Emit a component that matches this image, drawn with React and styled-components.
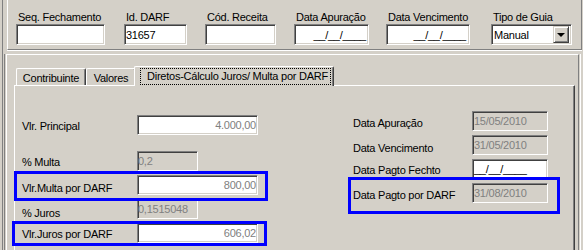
import React from 'react';
import styled, { createGlobalStyle } from 'styled-components';

const Global = createGlobalStyle`
  html, body { margin: 0; padding: 0; background: #D4D0C8; }
  body { font-family: "Liberation Sans", Arial, sans-serif; font-size: 11px; }
  * { box-sizing: border-box; }
`;

const Screen = styled.div`
  position: relative;
  width: 583px;
  height: 250px;
  overflow: hidden;
  background: #D4D0C8;
  color: #000;
  font-family: "Liberation Sans", Arial, sans-serif;
  font-size: 11px;
  letter-spacing: -0.25px;
  padding-left: 2px;
  display: flex;
`;

const Frame = styled.div`
  flex: 1;
  border-left: 1px solid #808080;
  display: flex;
  flex-direction: column;
`;

const TopPanel = styled.div`
  margin-left: 4px;
  width: 575px;
  height: 50px;
  border-left: 1px solid #fff;
  border-right: 1px solid #808080;
  border-bottom: 1px solid #808080;
  box-shadow: 0 1px 0 #fff;
  padding: 11px 0 0 8px;
  display: flex;
  align-items: flex-start;
`;

const Field = styled.div`
  display: flex;
  flex-direction: column;
  width: ${p => p.$w}px;
  margin-left: ${p => p.$ml || 0}px;
`;

const FieldLabel = styled.div`
  height: 13px;
  line-height: 13px;
  padding-left: 2px;
  white-space: nowrap;
`;

const Sunken = styled.div`
  height: ${p => p.$h || 20}px;
  width: ${p => p.$w ? `${p.$w}px` : '100%'};
  background: ${p => (p.$disabled ? '#D4D0C8' : '#fff')};
  color: ${p => p.$color || '#000'};
  border-top: 1px solid #808080;
  border-left: 1px solid #808080;
  border-bottom: 1px solid #fff;
  border-right: 1px solid #fff;
  box-shadow: inset 1px 1px 0 #404040, inset -1px -1px 0 #D4D0C8;
  display: flex;
  align-items: center;
  justify-content: ${p => (p.$align === 'right' ? 'flex-end' : 'flex-start')};
  padding: 0 ${p => p.$pr ?? 1}px 0 ${p => p.$pl ?? 1}px;
  white-space: nowrap;
  flex-shrink: 0;
`;

const SelectBox = styled(Sunken)`
  justify-content: space-between;
  padding: 0 2px 0 2px;
`;

const DropButton = styled.div`
  width: 16px;
  height: 17px;
  background: #D4D0C8;
  border-top: 1px solid #D4D0C8;
  border-left: 1px solid #D4D0C8;
  border-right: 1px solid #404040;
  border-bottom: 1px solid #404040;
  box-shadow: inset 1px 1px 0 #fff, inset -1px -1px 0 #808080;
  display: flex;
  align-items: center;
  justify-content: center;
`;

const Arrow = styled.div`
  width: 0;
  height: 0;
  border-left: 4px solid transparent;
  border-right: 4px solid transparent;
  border-top: 4px solid #000;
  margin-top: 1px;
`;

const LowerOuter = styled.div`
  margin-top: 4px;
  margin-left: 1px;
  width: 577px;
  flex: 1;
  border-left: 1px solid #808080;
  border-right: 1px solid #fff;
  display: flex;
`;

const LowerInner = styled.div`
  flex: 1;
  margin: 0 1px 0 1px;
  border-left: 1px solid #fff;
  border-top: 1px solid #fff;
  border-right: 1px solid #808080;
  padding: 11px 3px 0 7px;
  display: flex;
  flex-direction: column;
`;

const TabStrip = styled.div`
  display: flex;
  align-items: flex-end;
  padding-left: 2px;
  height: 19px;
  position: relative;
  z-index: 2;
`;

const Tab = styled.div`
  width: ${p => p.$w}px;
  height: ${p => (p.$active ? 20 : 17)}px;
  margin-left: ${p => (p.$active ? -2 : 0)}px;
  margin-bottom: ${p => (p.$active ? -1 : 0)}px;
  background: #D4D0C8;
  border-top: 1px solid #fff;
  border-left: 1px solid #fff;
  border-right: 1px solid #404040;
  border-top-left-radius: 2px;
  border-top-right-radius: 2px;
  box-shadow: inset -1px 0 0 #808080;
  display: flex;
  align-items: center;
  justify-content: center;
  padding-top: ${p => (p.$active ? 0 : 1)}px;
  padding-left: ${p => (p.$active ? 3 : 0)}px;
  white-space: nowrap;
  position: relative;
  z-index: ${p => (p.$active ? 2 : 1)};
`;

const Focus = styled.span`
  border: 1px dotted #000;
  padding: 1px 2px 1px 6px;
  line-height: 13px;
`;

const TabBody = styled.div`
  flex: 1;
  border-top: 1px solid #fff;
  border-left: 1px solid #fff;
  border-right: 1px solid #404040;
  box-shadow: inset -1px 0 0 #808080;
  display: flex;
  padding-left: 7px;
`;

const Column = styled.div`
  display: flex;
  flex-direction: column;
  width: ${p => p.$w}px;
  padding-top: ${p => p.$pt}px;
  gap: 4px;
`;

const Row = styled.div`
  display: flex;
  align-items: center;
  height: 20px;
  margin-top: ${p => p.$mt || 0}px;
`;

const RowLabel = styled.div`
  width: ${p => p.$w}px;
  flex-shrink: 0;
  white-space: nowrap;
  position: relative;
  top: ${p => p.$dy || 0}px;
`;

const Highlight = styled.div`
  position: absolute;
  left: ${p => p.$x}px;
  top: ${p => p.$y}px;
  width: ${p => p.$w}px;
  height: ${p => p.$h}px;
  border: 3px solid #0000ff;
  pointer-events: none;
  z-index: 5;
`;

const GRAY = '#808080';

export default function App() {
  return (
    <Screen>
      <Global />
      <Frame>
        <TopPanel>
          <Field $w={89}>
            <FieldLabel>Seq. Fechamento</FieldLabel>
            <Sunken $h={21} />
          </Field>
          <Field $w={63} $ml={19}>
            <FieldLabel>Id. DARF</FieldLabel>
            <Sunken $h={21} $pl={1}>31657</Sunken>
          </Field>
          <Field $w={71} $ml={18}>
            <FieldLabel>Cód. Receita</FieldLabel>
            <Sunken $h={21} />
          </Field>
          <Field $w={75} $ml={18}>
            <FieldLabel>Data Apuração</FieldLabel>
            <Sunken $h={21} $align="right" $pr={2}>__/__/____</Sunken>
          </Field>
          <Field $w={84} $ml={17}>
            <FieldLabel>Data Vencimento</FieldLabel>
            <Sunken $h={21} $align="right" $pr={3}>__/__/____</Sunken>
          </Field>
          <Field $w={81} $ml={21}>
            <FieldLabel>Tipo de Guia</FieldLabel>
            <SelectBox $h={21}>
              <span>Manual</span>
              <DropButton><Arrow /></DropButton>
            </SelectBox>
          </Field>
        </TopPanel>

        <LowerOuter>
          <LowerInner>
            <TabStrip>
              <Tab $w={70}>Contribuinte</Tab>
              <Tab $w={50}>Valores</Tab>
              <Tab $w={200} $active>
                <Focus>Diretos-Cálculo Juros/ Multa por DARF</Focus>
              </Tab>
            </TabStrip>
            <TabBody>
              <Column $w={331} $pt={29}>
                <Row>
                  <RowLabel $w={115} $dy={1}>Vlr. Principal</RowLabel>
                  <Sunken $w={121} $align="right" $color={GRAY} $pr={1}>4.000,00</Sunken>
                </Row>
                <Row $mt={12}>
                  <RowLabel $w={115} $dy={1}>% Multa</RowLabel>
                  <Sunken $w={61} $disabled $color={GRAY} $pl={0}>0,2</Sunken>
                </Row>
                <Row>
                  <RowLabel $w={115} $dy={3}>Vlr.Multa por DARF</RowLabel>
                  <Sunken $w={121} $align="right" $color={GRAY} $pr={1}>800,00</Sunken>
                </Row>
                <Row>
                  <RowLabel $w={115} $dy={4}>% Juros</RowLabel>
                  <Sunken $w={61} $disabled $color={GRAY} $pl={0}>0,1515048</Sunken>
                </Row>
                <Row>
                  <RowLabel $w={115} $dy={1}>Vlr.Juros por DARF</RowLabel>
                  <Sunken $w={121} $align="right" $color={GRAY} $pr={1}>606,02</Sunken>
                </Row>
              </Column>
              <Column $w={200} $pt={25}>
                <Row>
                  <RowLabel $w={119} $dy={2}>Data Apuração</RowLabel>
                  <Sunken $w={76} $disabled $color={GRAY}>15/05/2010</Sunken>
                </Row>
                <Row>
                  <RowLabel $w={119} $dy={3}>Data Vencimento</RowLabel>
                  <Sunken $w={76} $disabled $color={GRAY}>31/05/2010</Sunken>
                </Row>
                <Row>
                  <RowLabel $w={119} $dy={1}>Data Pagto Fechto</RowLabel>
                  <Sunken $w={76}>__/__/____</Sunken>
                </Row>
                <Row>
                  <RowLabel $w={119} $dy={2}>Data Pagto por DARF</RowLabel>
                  <Sunken $w={76} $disabled $color={GRAY}>31/08/2010</Sunken>
                </Row>
              </Column>
            </TabBody>
          </LowerInner>
        </LowerOuter>
      </Frame>

      <Highlight $x={14} $y={171} $w={254} $h={30} />
      <Highlight $x={12} $y={221} $w={255} $h={25} />
      <Highlight $x={348} $y={177} $w={212} $h={37} />
    </Screen>
  );
}
